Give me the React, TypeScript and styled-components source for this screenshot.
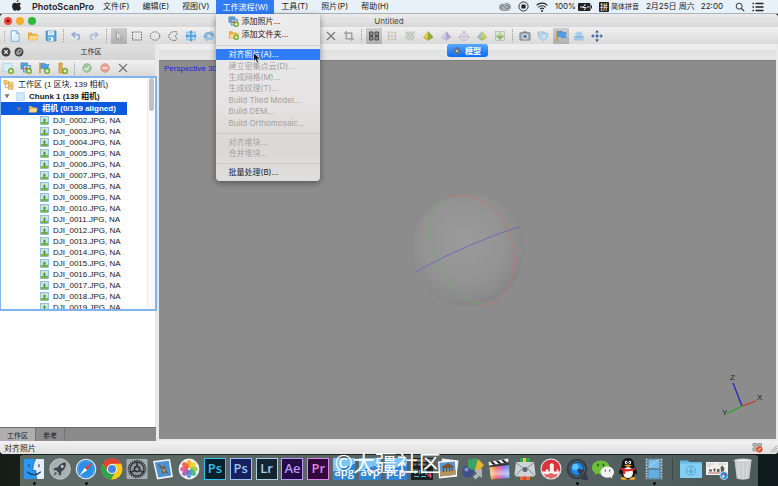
import React, { ReactNode } from 'react';
import styled, { createGlobalStyle, css } from 'styled-components';

const UI = `Inter, "Noto Sans CJK SC", sans-serif`;
const HELV = `"Liberation Sans", "Noto Sans CJK SC", sans-serif`;

const GlobalStyle = createGlobalStyle`
  * { box-sizing: border-box; }
  html, body, #root { height: 100%; }
  body { margin: 0; overflow: hidden; background: #141d1b; font-family: ${UI}; color: #1c1c1c; }
  button { font: inherit; color: inherit; border: 0; background: none; padding: 0; margin: 0; }
  ul { list-style: none; margin: 0; padding: 0; }
  svg { display: block; flex: none; }
`;

/* ---------- small icons, drawn on a 12 x 12 grid ---------- */

const plus = (
  <>
    <circle cx="9" cy="9" r="2.8" fill="#7fb52e" stroke="#5b8f1c" strokeWidth=".5" />
    <path d="M9 7.4v3.2M7.4 9h3.2" stroke="#fff" strokeWidth="1" />
  </>
);
const folder = (
  <>
    <path d="M1 10V2.5h3.6l1 1.3H10V10z" fill="#e2ac3f" />
    <path d="M1 10l1.7-4.7h8.8L10 10z" fill="#fbdc8a" stroke="#d9a23a" strokeWidth=".5" />
  </>
);
const photos = (
  <>
    <rect x="1" y="1" width="6.5" height="6" fill="#5fa6de" stroke="#3f7fb9" strokeWidth=".7" />
    <rect x="3.5" y="3.5" width="7" height="6.5" fill="#a9d3f2" stroke="#3f7fb9" strokeWidth=".7" />
    <path d="M4 7.500l2.500-3 2 3z" fill="#e2573c" />
  </>
);
const pyramid = (l: string, r: string, b: string) => (
  <>
    <path d="M6 1L.6 7.2 6 10.8z" fill={l} />
    <path d="M6 1l5.4 6.2L6 10.8z" fill={r} />
    <path d="M.6 7.2L6 8l5.4-.8L6 10.8z" fill={b} opacity=".7" />
  </>
);
const flag = (
  <>
    <path d="M2 .8v10.4" stroke="#c9973a" strokeWidth="1.6" />
    <path d="M3 1.4h4.2v1.2h4L9.9 5l1.3 2.6H6.4V6.4H3z" fill="#4f9fe8" stroke="#2a74bd" strokeWidth=".5" />
  </>
);

const glyphs: Record<string, ReactNode> = {
  newFile: (
    <>
      <path d="M2.2.8h5.2L10 3.4v7.8H2.2z" fill="#f4fafe" stroke="#5d9cc9" strokeWidth=".8" />
      <path d="M7.2.8v2.8H10" fill="#bfe0f5" stroke="#5d9cc9" strokeWidth=".7" />
      <path d="M3.4 5h5.2v5H3.4z" fill="#d8edf9" />
    </>
  ),
  folder,
  save: (
    <>
      <path d="M1 1h10v10H2.2L1 9.8z" fill="#56a9dc" stroke="#2f80b8" strokeWidth=".6" />
      <path d="M3 1.2h6v4H3zM3.6 7.2h4.8V11H3.6z" fill="#eef7fc" />
      <path d="M4.2 8h1.5v2.4H4.2z" fill="#3d86b7" />
      <path d="M4 2.6h4M4 3.8h4" stroke="#8bbcdc" strokeWidth=".5" />
    </>
  ),
  undo: (
    <path d="M5 2L2 4.6l3.2 2.6M2.4 4.6h4.8c3 0 3 4.4.2 5.4" fill="none" stroke="#8fa8d6" strokeWidth="1.5" />
  ),
  redo: (
    <path d="M7 2l3 2.6-3.2 2.6M9.6 4.6H4.8c-3 0-3 4.4-.2 5.4" fill="none" stroke="#a7bce0" strokeWidth="1.5" />
  ),
  pointer: (
    <path d="M3.4 1v8.6l2-1.8 1.4 3.2 1.5-.7L6.9 7.2h2.7z" fill="#dcdcdc" stroke="#8f8f8f" strokeWidth=".7" />
  ),
  rectSel: <rect x="1.5" y="2" width="9" height="8" fill="none" stroke="#555" strokeWidth=".9" strokeDasharray="1.6 1.1" />,
  ovalSel: <ellipse cx="6" cy="6" rx="4.8" ry="4.2" fill="none" stroke="#555" strokeWidth=".9" strokeDasharray="1.6 1" />,
  freeSel: (
    <path
      d="M9.6 1.8C6 .8 1.8 3 1.8 6.2S5 10.8 8 10.4c2.6-.4 1.6-2 .8-3-.9-1.2.2-1.8.9-3 .5-.9.7-2.2-.1-2.6z"
      fill="none" stroke="#555" strokeWidth=".9" strokeDasharray="1.6 1"
    />
  ),
  move: (
    <>
      <rect x="1.600" y="2" width="8.800" height="8" fill="#b3d8f2" stroke="#79b4de" strokeWidth=".6" />
      <path d="M6 .2l2 2.3H6.7v2.8h2.8V4l2.3 2-2.3 2V6.7H6.7v2.8H8l-2 2.3-2-2.3h1.3V6.7H2.5V8L.2 6l2.3-2v1.3h2.8V2.5H4z" fill="#4c9ad8" />
    </>
  ),
  rotate: (
    <>
      <path d="M1 7.5C.6 3.6 4 1.4 7.4 2.6L8.2 1l2.6 3.6-4 .8.5-1.3C5 3.6 3.4 5 3.6 7z" fill="#82badf" stroke="#5094c4" strokeWidth=".4" />
      <path d="M11 4.8c.4 4-3 6-6.4 4.8L3.8 11 1.2 7.6l4-.8-.5 1.2c2.3.6 4-.8 3.8-2.8z" fill="#a4cfec" stroke="#5094c4" strokeWidth=".4" />
    </>
  ),
  cross: <path d="M2 2l8 8M10 2l-8 8" stroke="#777" strokeWidth="1.3" />,
  crop: <path d="M3.2 1v7.8H11M1 3.2h7.8V11" fill="none" stroke="#949494" strokeWidth="1.2" />,
  grid: (
    <path
      d="M1.500 2h3.500v3.500H1.500zM1.500 6.500h3.500V10H1.500zM7 2h3.500v3.500H7zM7 6.500h3.500V10H7z"
      fill="#8c8c8c" stroke="#4e4e4e" strokeWidth="1"
    />
  ),
  colorDots: (
    <>
      <path d="M1.6 1.6h2.2v2.2H1.6zM8.2 4.8h2.2V7H8.2z" fill="#d9b6c6" />
      <path d="M4.9 1.6h2.2v2.2H4.9zM1.6 8h2.2v2.2H1.6z" fill="#e4c39a" />
      <path d="M8.2 1.6h2.2v2.2H8.2zM4.9 8h2.2v2.2H4.9z" fill="#bcd3a8" />
      <path d="M1.6 4.8h2.2V7H1.6zM8.2 8h2.2v2.2H8.2z" fill="#a9c1de" />
      <path d="M4.9 4.8h2.2V7H4.9z" fill="#d9cf9a" />
    </>
  ),
  noise: (
    <>
      <rect x="1.4" y="1.4" width="9.2" height="9.2" fill="#d2d6d3" />
      <path d="M2 2h1.5v1.5H2zM5 2.2h1.2v1.2H5zM8.6 2h1.4v1.4H8.6zM3.6 4.4h1.6V6H3.6zM7 4h1.6v1.6H7zM2 7h1.4v1.4H2zM5.4 6.4H7V8H5.4zM8.8 7h1.2v1.4H8.8zM4 9h1.4v1.2H4zM7.4 9h1.4v1.2H7.4z" fill="#b3bab8" />
    </>
  ),
  pyrGreen: pyramid('#d8cf55', '#86a83a', '#b8a83c'),
  pyrPurple: pyramid('#d3cce6', '#ada6cc', '#bcb4d6'),
  pyrWire: (
    <path d="M6 1L.8 7.4 6 10.8l5.2-3.4zM6 1v9.8M.8 7.4L6 6l5.2 1.4" fill="#e6e2ee" stroke="#b3abc8" strokeWidth=".7" />
  ),
  pyrTex: pyramid('#9cc7d6', '#d8c66a', '#8fbf6a'),
  tileTex: (
    <>
      <rect x="1.5" y="1.5" width="9" height="9" fill="#dfe5d4" stroke="#a9b0a2" strokeWidth=".6" />
      <path d="M1.8 6L6 2.6 10.2 6z" fill="#c9d9a0" />
      <path d="M1.8 6h8.4L6 10z" fill="#8dbc6a" />
      <path d="M1.5 6h9M6 1.5v9" stroke="#9aa597" strokeWidth=".5" />
    </>
  ),
  camera: (
    <>
      <rect x=".8" y="2.6" width="10.4" height="7.6" rx=".8" fill="#a3a9ae" stroke="#70767b" strokeWidth=".6" />
      <rect x="4" y="1.4" width="4" height="1.6" fill="#7f868b" />
      <circle cx="6" cy="6.4" r="2.9" fill="#e5eaee" />
      <circle cx="6" cy="6.4" r="1.9" fill="#5b7f9e" />
    </>
  ),
  shapes: (
    <path d="M1 2h6.6v1.4l3 .2L10.8 7 6.6 11 2 7.2z M3 6l4.4-3.8" fill="#c2dcf0" stroke="#8ab4d6" strokeWidth=".8" />
  ),
  flag,
  layers: (
    <>
      <path d="M2.5 3.2C4 .9 8 .9 9.5 3.2l.6 1.6H1.9z" fill="#a9cdea" />
      <path d="M1.2 6.8c1-2 8.6-2 9.6 0v1.4H1.2z" fill="#8cbbe2" />
      <path d="M.8 9.4c1-1.4 9.4-1.4 10.4 0v1.2H.8z" fill="#9cc6e8" />
    </>
  ),
  fit: (
    <>
      <path d="M6 0l1.900 2.600H4.100zM6 12L4.100 9.400h3.800zM0 6l2.600-1.900v3.800zM12 6L9.400 7.900V4.100z" fill="#3b5c92" />
      <circle cx="6" cy="6" r="1.400" fill="#3b5c92" />
      <path d="M6 2v2M6 8v2M2 6h2M8 6h2" stroke="#6f8bb8" strokeWidth="1" />
    </>
  ),
  addChunk: (
    <>
      <rect x="1" y="1.4" width="9" height="8.4" fill="#d7effb" stroke="#7dbbe0" strokeWidth=".7" strokeDasharray="1 .5" />
      {plus}
    </>
  ),
  addPhotos: <>{photos}{plus}</>,
  addFlag: <>{flag}{plus}</>,
  addScale: (
    <>
      <path d="M3 1h3.2v7h4.4v3H3z" fill="#edb845" stroke="#b98323" strokeWidth=".6" />
      <path d="M3 3h1.4M3 5h1.4M3 7h1.4" stroke="#a06d17" strokeWidth=".6" />
      {plus}
    </>
  ),
  addFolder: <>{folder}{plus}</>,
  ok: (
    <>
      <circle cx="6" cy="6" r="4.4" fill="#a0c6a0" stroke="#86ab86" strokeWidth=".5" />
      <path d="M3.8 6.2l1.6 1.6 2.9-3.4" fill="none" stroke="#eef6ee" strokeWidth="1.2" />
    </>
  ),
  deny: (
    <>
      <circle cx="6" cy="6" r="4.4" fill="#e8a08a" stroke="#cf8a76" strokeWidth=".5" />
      <path d="M3.4 6h5.2" stroke="#fbeeea" strokeWidth="1.7" />
    </>
  ),
  workspace: (
    <>
      <path d="M1 1.4h2.6l.5.8h1.7v3.4H1zM6 3.2h2.2l.5.8h2.3v3H6z" fill="#f4cf7a" stroke="#c98f2c" strokeWidth=".6" />
      <path d="M2.6 5.8v3.4h3.6" stroke="#888" strokeWidth=".7" fill="none" />
      <path d="M6 7.6h2.2l.5.7h2.3v2.9H6z" fill="#f4cf7a" stroke="#c98f2c" strokeWidth=".6" />
    </>
  ),
  chunk: <rect x=".8" y=".8" width="10.4" height="10.4" fill="#cfe9f9" stroke="#8ec3e6" strokeWidth=".9" strokeDasharray="1 .5" />,
  picture: (
    <>
      <rect x=".6" y=".6" width="10.8" height="10.8" fill="#c4e4f7" stroke="#6faed6" strokeWidth=".9" />
      <path d="M1 8.4l3-.8 4 .4 3-.6V11H1z" fill="#7fb441" />
      <path d="M6 3L3.8 6h1.4v3.4h1.6V6h1.4z" fill="#4b8e2a" />
      <circle cx="2.8" cy="3" r="1.2" fill="#f6d65b" />
    </>
  ),
  apple: (
    <path
      d="M8.2 0c.1 1.2-.9 2.3-2.1 2.3C6 1.200 7 .1 8.200 0zM10.900 8.700c-.5 1.300-1.500 3.100-2.700 3.100-.8 0-1-.5-2-.5s-1.300.5-2 .5C2.800 11.800 1.200 9 1.200 6.600c0-2.300 1.400-3.600 2.900-3.600.9 0 1.500.5 2.200.5.6 0 1.300-.6 2.400-.6.8 0 1.700.5 2.200 1.200-1.900 1.200-1.600 3.700 0 4.600z"
      fill="#222"
    />
  ),
  cloud: (
    <>
      <path d="M3.400 9.500a3.200 3.200 0 1 1 1.800-5.900 3.600 3.600 0 1 1 3 5.900z" fill="#b2b6bb" stroke="#7d8288" strokeWidth=".7" />
      <path d="M3.600 7.800a1.600 1.600 0 1 1 1.300-2.500L7 7.300A1.700 1.700 0 1 0 7 4.800" fill="none" stroke="#666b70" strokeWidth=".9" />
    </>
  ),
  record: (
    <>
      <circle cx="6" cy="6" r="5" fill="none" stroke="#222" strokeWidth="1" />
      <rect x="3.700" y="3.700" width="4.600" height="4.600" rx=".6" fill="#222" />
    </>
  ),
  wifi: (
    <>
      <path d="M.6 4.400a7.600 7.600 0 0 1 10.800 0M2.400 6.300a5 5 0 0 1 7.200 0M4.100 8.100a2.700 2.700 0 0 1 3.800 0" fill="none" stroke="#222" strokeWidth="1.100" />
      <circle cx="6" cy="10" r="1" fill="#222" />
    </>
  ),
  search: (
    <>
      <circle cx="5" cy="5" r="3.600" fill="none" stroke="#222" strokeWidth="1.100" />
      <path d="M7.700 7.700L11 11" stroke="#222" strokeWidth="1.300" />
    </>
  ),
  list: <path d="M.5 2.500H2M3.500 2.500h8M.5 6H2M3.500 6h8M.5 9.500H2M3.500 9.500h8" stroke="#222" strokeWidth="1.300" />,
  closeDark: (
    <>
      <circle cx="6" cy="6" r="5.400" fill="#444" />
      <path d="M3.900 3.900l4.200 4.200M8.100 3.900L3.900 8.100" stroke="#eee" strokeWidth="1.300" />
    </>
  ),
  floatDark: (
    <>
      <circle cx="6" cy="6" r="5.400" fill="#444" />
      <path d="M5 3.400h3.600V7H5zM3.500 5v3.600h3.600" fill="none" stroke="#eee" strokeWidth=".9" />
    </>
  ),
  closeTab: (
    <>
      <circle cx="6" cy="6" r="5.400" fill="#5b6f8b" />
      <path d="M3.900 3.900l4.200 4.200M8.100 3.900L3.900 8.100" stroke="#c8d6ea" strokeWidth="1.300" />
    </>
  ),
  network: (
    <>
      <path d="M1 1.500h4v3H1zM6.500 1.500h4v3h-4zM1 6.500h4v3H1zM3 4.500v2M5 3h2" fill="#b9bcbf" stroke="#85888b" strokeWidth=".8" />
      <circle cx="8" cy="8" r="3.500" fill="#e4502a" />
      <path d="M6.400 9.600l3.200-3.200" stroke="#fff" strokeWidth="1" />
    </>
  ),
  grip: <path d="M11 3l-8 8M11 6l-5 5M11 9l-2 2" stroke="#8a8a8a" strokeWidth=".9" />,
  triangle: <path d="M1 2.500h10L6 10.500z" fill="#777" />,
};

const Glyph = ({ name, size = 12 }: { name: string; size?: number }) => (
  <svg width={size} height={size} viewBox="0 0 12 12" aria-hidden="true">{glyphs[name]}</svg>
);

/* ---------- menu bar ---------- */

const Screen = styled.div`
  height: 100vh;
  display: flex;
  flex-direction: column;
`;
const MenuBar = styled.nav`
  flex: none;
  height: 14px;
  display: flex;
  align-items: stretch;
  gap: 1px;
  padding: 0 14px 0 11px;
  background: #e8f0f8;
  border-bottom: 1px solid #a9b3bd;
  font-size: 8px;
  line-height: 13px;
  white-space: nowrap;
  z-index: 3;
`;
const MenuSlot = styled.div`
  position: relative;
  display: flex;
`;
const MenuTitle = styled.button<{ $bold?: boolean; $open?: boolean }>`
  display: flex;
  align-items: center;
  padding: 0 6px;
  line-height: 13px;
  ${p => p.$bold && css`font-size: 9px; font-weight: 600; padding: 0 2px 0 9px;`}
  ${p => p.$open && css`background: #2f7cf6; color: #fff; height: 14px;`}
`;
const StatusItems = styled.div`
  margin-left: auto;
  display: flex;
  align-items: center;
  gap: 7px;
`;
const StatusPair = styled.span`
  display: flex;
  align-items: center;
  gap: 2px;
`;
const Percent = styled.span` font-size: 8px; `;
const InputName = styled.span` font-size: 7px; `;
const InputBadge = styled.span`
  width: 10px;
  height: 10px;
  border-radius: 1px;
  background: #222;
  color: #fff;
  font-size: 8px;
  line-height: 10px;
  text-align: center;
`;
const Clock = styled.span`
  display: flex;
  gap: 6px;
  margin-right: 5px;
`;

const Menu = styled.div`
  position: absolute;
  top: 14px;
  left: 0;
  width: 104px;
  padding: 1px 0 3px;
  background: linear-gradient(#ededed, #e4e2e2 55%, #dcd7d6 78%, #dedddd);
  border-radius: 0 0 4px 4px;
  box-shadow: 0 2px 6px rgba(0, 0, 0, .4);
`;
const MenuGroup = styled.div<{ $height: number }>`
  display: grid;
  grid-template-columns: 100%;
  grid-auto-rows: 1fr;
  height: ${p => p.$height}px;
`;
const MenuRule = styled.hr`
  height: 1px;
  margin: 4px 0 3px;
  border: 0;
  background: #cbcbcb;
`;
const MenuItem = styled.button<{ $selected?: boolean }>`
  display: flex;
  align-items: center;
  gap: 2px;
  padding: 0 0 0 12px;
  text-align: left;
  line-height: 11px;
  color: #222;
  &:disabled { color: #a2a2a2; }
  ${p => p.$selected && css`background: #2f7cf6; color: #fff;`}
`;
const MouseArrow = styled.svg`
  position: absolute;
  left: 37px;
  top: 38px;
`;

const WorkflowMenu = () => (
  <Menu role="menu">
    <MenuGroup $height={26}>
      <MenuItem role="menuitem"><Glyph name="addPhotos" size={11} />添加照片...</MenuItem>
      <MenuItem role="menuitem"><Glyph name="addFolder" size={11} />添加文件夹...</MenuItem>
    </MenuGroup>
    <MenuRule />
    <MenuGroup $height={80}>
      <MenuItem role="menuitem" $selected>对齐照片(A)...</MenuItem>
      {['建立密集点云(D)...', '生成网格(M)...', '生成纹理(T)...', 'Build Tiled Model...', 'Build DEM...', 'Build Orthomosaic...'].map(t => (
        <MenuItem role="menuitem" key={t} disabled>{t}</MenuItem>
      ))}
    </MenuGroup>
    <MenuRule />
    <MenuGroup $height={22}>
      <MenuItem role="menuitem" disabled>对齐堆块...</MenuItem>
      <MenuItem role="menuitem" disabled>合并堆块...</MenuItem>
    </MenuGroup>
    <MenuRule />
    <MenuGroup $height={11}>
      <MenuItem role="menuitem">批量处理(B)...</MenuItem>
    </MenuGroup>
    <MouseArrow width="8" height="12" viewBox="0 0 8 12" aria-hidden="true">
      <path d="M.6.6v8.800l2-1.800 1.400 3.400 1.700-.7-1.400-3.300h2.900z" fill="#111" stroke="#fff" strokeWidth=".6" />
    </MouseArrow>
  </Menu>
);

/* ---------- application window ---------- */

const Window = styled.main`
  flex: 1;
  min-height: 0;
  display: flex;
  flex-direction: column;
  background: #e9e9e9;
  border-radius: 4px;
  overflow: hidden;
`;
const TitleBar = styled.header`
  flex: none;
  height: 13px;
  display: grid;
  grid-template-columns: 1fr auto 1fr;
  align-items: center;
  padding: 0 4px;
  background: linear-gradient(#ebebeb, #d8d8d8);
`;
const Title = styled.h1`
  margin: 0;
  font-size: 8px;
  font-weight: 400;
  line-height: 12px;
  color: #4a4a4a;
`;
const Lights = styled.div`
  display: flex;
  gap: 4px;
`;
const Light = styled.button<{ $color: string; $dot?: boolean }>`
  width: 8px;
  height: 8px;
  border-radius: 50%;
  background: ${p => (p.$dot ? `radial-gradient(circle, #7c100c 1px, ${p.$color} 2px)` : p.$color)};
`;
const Toolbar = styled.div<{ $side?: boolean }>`
  flex: none;
  height: ${p => (p.$side ? 16 : 17)}px;
  display: flex;
  align-items: center;
  padding-left: ${p => (p.$side ? 0 : 4)}px;
  background: linear-gradient(#f1f1f1, #d9d9d9);
`;
const Handle = styled.span`
  width: 1px;
  height: 10px;
  margin-right: 2px;
  border-left: 1px dotted #aaa;
`;
const ToolGroup = styled.div`
  display: flex;
  gap: 2px;
`;
const ToolRule = styled.span`
  height: 13px;
  margin: 0 4px;
  border-left: 1px dotted #999;
`;
const Tool = styled.button<{ $pressed?: boolean }>`
  width: 16px;
  height: 16px;
  display: flex;
  align-items: center;
  justify-content: center;
  ${p => p.$pressed && css`background: linear-gradient(#cdcdcd, #b0b0b0);`}
`;
const Body = styled.div`
  flex: 1;
  min-height: 0;
  display: grid;
  grid-template-columns: 159px 1fr;
`;
const Side = styled.aside`
  min-height: 0;
  display: flex;
  flex-direction: column;
  padding-right: 4px;
`;
const SideHead = styled.div`
  flex: none;
  height: 16px;
  display: flex;
  align-items: center;
  gap: 3px;
  padding-left: 1px;
  background: linear-gradient(#e0e0e0, #d4d4d4);
`;
const SideButton = styled.button` display: block; `;
const SideTitle = styled.h2`
  flex: 1;
  margin: 0;
  text-align: center;
  font-size: 7px;
  font-weight: 400;
  line-height: 10px;
`;
const TreeArea = styled.div`
  flex: 1;
  min-height: 0;
  background: #fff;
`;
const TreeBox = styled.div`
  position: relative;
  height: 235px;
  max-height: 100%;
  margin-right: -2px;
  overflow: hidden;
  background: #fff;
  border: 2px solid #83b3ee;
  border-left-width: 1px;
  font-family: ${HELV};
  font-size: 8px;
  color: #151515;
`;
const Track = styled.span`
  position: absolute;
  top: 0;
  bottom: 0;
  right: 0;
  width: 8px;
  border-left: 1px solid #ececec;
  background: #fafafa;
`;
const Thumb = styled.span`
  display: block;
  width: 5px;
  height: 33px;
  margin: 0 1px;
  border-radius: 3px;
  background: #c1c1c1;
`;
const Node = styled.li<{ $indent: number; $heading?: boolean; $bold?: boolean; $selected?: boolean }>`
  display: flex;
  align-items: center;
  gap: 4px;
  height: ${p => (p.$heading ? 12 : 11)}px;
  margin-right: 28px;
  padding-left: ${p => p.$indent}px;
  white-space: nowrap;
  line-height: 11px;
  font-weight: ${p => (p.$bold ? 700 : 400)};
  ${p => p.$selected && css`height: 13px; background: #0b5bdc; color: #fff;`}
`;
const Twist = styled.span`
  width: 7px;
  margin-right: 1px;
`;
const SideTabs = styled.div`
  flex: none;
  height: 14px;
  display: flex;
  margin-right: -1px;
  background: #8a8a8a;
  border-top: 1px solid #6c6c6c;
  font-size: 7px;
`;
const SideTab = styled.button<{ $active?: boolean }>`
  padding: 0 7px;
  border-right: 1px solid #747474;
  background: ${p => (p.$active ? '#aeaeae' : '#8d8d8d')};
`;
const Work = styled.section`
  min-width: 0;
  display: flex;
  flex-direction: column;
  padding: 0 2px 2px 0;
`;
const TabStrip = styled.div`
  flex: none;
  height: 16px;
  display: flex;
  justify-content: center;
  align-items: flex-start;
  background: linear-gradient(#ededed 6px, #d9d9d9 6px, #e4e4e4 7px);
`;
const ModelTab = styled.button`
  height: 13px;
  display: flex;
  align-items: center;
  gap: 4px;
  padding: 0 7px 0 6px;
  border-radius: 3px;
  background: linear-gradient(#58a8fa, #0a6af4);
  color: #fff;
  font-size: 8px;
  font-weight: 700;
  line-height: 12px;
`;
const Viewport = styled.div`
  position: relative;
  flex: 1;
  min-height: 0;
  display: flex;
  align-items: center;
  justify-content: center;
  background: #8c8c8c;
  border-top: 1px solid #7e7e7e;
`;
const Projection = styled.span`
  position: absolute;
  left: 5px;
  top: 3px;
  font-family: ${HELV};
  font-size: 8px;
  line-height: 10px;
  color: #1f1fe0;
`;
const Axes = styled.svg`
  position: absolute;
  right: 8px;
  bottom: 20px;
  font-family: ${HELV};
  font-size: 8px;
`;
const StatusBar = styled.footer`
  flex: none;
  height: 13px;
  display: flex;
  align-items: center;
  gap: 5px;
  padding-left: 4px;
  background: linear-gradient(#f2f2f2, #dfdfdf);
  font-size: 8px;
  line-height: 12px;
`;
const StatusText = styled.span` flex: 1; `;

const Sphere = () => (
  <svg width="116" height="116" viewBox="0 0 116 116" role="img" aria-label="trackball">
    <defs>
      <radialGradient id="ball" cx=".46" cy=".42" r=".58">
        <stop offset="0" stopColor="#9b9b9b" />
        <stop offset=".6" stopColor="#949494" />
        <stop offset=".9" stopColor="#8b8b8b" />
        <stop offset="1" stopColor="#858585" />
      </radialGradient>
    </defs>
    <circle cx="58" cy="58" r="56" fill="url(#ball)" />
    <path d="M36 6C19 14 15 37 25 63c11 30 32 52 53 49" fill="none" stroke="#6cab6c" strokeWidth=".8" />
    <path d="M36 6c26-9 50 5 63 35 11 29 7 62-21 71l-7 1" fill="none" stroke="#c0736b" strokeWidth=".8" />
    <path d="M6 80C31 65 83 42 110 35" fill="none" stroke="#6969b8" strokeWidth=".9" />
  </svg>
);

const Tools = ({ names, pressed }: { names: string[]; pressed?: string }) => (
  <ToolGroup>
    {names.map((n, i) => (
      <Tool key={n + i} aria-label={n} $pressed={n === pressed}><Glyph name={n} /></Tool>
    ))}
  </ToolGroup>
);

/* ---------- dock ---------- */

const Desktop = styled.div`
  position: relative;
  flex: none;
  height: 32px;
  padding: 1px 20px 0;
  background: linear-gradient(90deg, #161d17, #202a25 30%, #17211f 70%, #0f1b1c);
`;
const Dock = styled.div`
  height: 100%;
  display: flex;
  justify-content: space-between;
  padding: 3px 4px 0 3px;
  border-radius: 3px 3px 0 0;
  background: linear-gradient(90deg, #5d6964, #5a6665 60%, #4c5a5a);
`;
const DockItem = styled.button<{ $running?: boolean }>`
  position: relative;
  width: 22px;
  height: 22px;
  ${p => p.$running && css`
    &::after {
      content: '';
      position: absolute;
      left: 10px;
      bottom: -5px;
      width: 3px;
      height: 3px;
      border-radius: 50%;
      background: #0a0a0a;
    }
  `}
`;
const DockRule = styled.span`
  width: 1px;
  height: 22px;
  margin: 0 3px;
  background: #3c4746;
`;
const AdobeTile = styled.span<{ $bg: string; $fg: string }>`
  display: block;
  height: 22px;
  border: 1px solid ${p => p.$fg};
  background: ${p => p.$bg};
  color: ${p => p.$fg};
  font-family: "Open Sans", sans-serif;
  font-size: 13px;
  font-weight: 600;
  line-height: 19px;
  text-align: center;
`;
const FileTile = styled.span`
  display: flex;
  align-items: flex-end;
  justify-content: center;
  height: 22px;
  background: linear-gradient(160deg, #7cc4f4 45%, #2f86d2 46%);
  color: #fff;
  font-family: "Open Sans", sans-serif;
  font-size: 11px;
  font-weight: 600;
  line-height: 16px;
`;
const Watermark = styled.span`
  position: absolute;
  left: 43%;
  top: -8px;
  font-family: "Noto Sans CJK SC", sans-serif;
  font-size: 22px;
  line-height: 30px;
  color: #fff;
  white-space: nowrap;
  z-index: 4;
`;

const petals = ['#f6a623', '#f3d325', '#9ccb3b', '#3fb37f', '#4a90d9', '#9b59b6', '#e0529c', '#ee5a3a'];

const dockArt: Record<string, ReactNode> = {
  Finder: (
    <>
      <rect x="1" y="1" width="20" height="20" rx="1" fill="#e2eefa" />
      <path d="M1 1h11.500C10.500 5 10 8.500 9.800 12.500h3c0 3 .2 5.500 1 8.500H1z" fill="#2a98f0" />
      <path d="M12.500 1C10.500 5 10 8.500 9.800 12.500h3c0 3 .2 5.500 1 8.500" fill="none" stroke="#1d4f86" strokeWidth=".7" />
      <path d="M6 6.500v2.200M16 6.500v2.200M4.500 14c3.500 3.500 9.500 3.500 13 0" fill="none" stroke="#17406e" strokeWidth="1.100" strokeLinecap="round" />
    </>
  ),
  Launchpad: (
    <>
      <circle cx="11" cy="11" r="10.300" fill="#a9b0b4" stroke="#d0d5d8" strokeWidth=".7" />
      <path d="M17 4.500c-4 0-7 2-8.500 5L5.500 10l-1.200 2.200 2.900.1 2.500 2.500.1 3 2.200-1.300.5-3c3-1.500 4.700-4.600 4.500-9z" fill="#3f474c" />
      <circle cx="13.200" cy="8.500" r="1.400" fill="#c3cacd" />
      <path d="M6.500 14l-2.200 3.700 3.700-2.200z" fill="#3f474c" />
    </>
  ),
  Safari: (
    <>
      <circle cx="11" cy="11" r="10.300" fill="#e8edf0" />
      <circle cx="11" cy="11" r="9.200" fill="#2b8fe6" />
      <circle cx="11" cy="11" r="7.900" fill="none" stroke="#a8d5f8" strokeWidth="1" strokeDasharray=".5 1.200" />
      <path d="M17.500 4.500L9.700 9.700l2.600 2.600z" fill="#ee3e34" />
      <path d="M4.500 17.500l5.200-7.800 2.600 2.600z" fill="#f3f5f7" />
    </>
  ),
  Chrome: (
    <>
      <circle cx="11" cy="11" r="10.500" fill="#fbc916" />
      <path d="M11 .5A10.500 10.500 0 0 0 1.900 5.800l4.500 7.800A5.200 5.200 0 0 1 11 5.800h9.100A10.500 10.500 0 0 0 11 .5z" fill="#df4132" />
      <path d="M1.900 5.800a10.500 10.500 0 0 0 8 15.700l4.800-7.900a5.200 5.200 0 0 1-8.300 0z" fill="#2da44f" />
      <circle cx="11" cy="11" r="5.100" fill="#f5f5f5" />
      <circle cx="11" cy="11" r="4" fill="#4387ee" />
    </>
  ),
  Settings: (
    <>
      <rect x=".5" y="1" width="21" height="20" rx="1" fill="#a5adb3" />
      <circle cx="11" cy="11" r="8.500" fill="none" stroke="#2d3135" strokeWidth="1.500" strokeDasharray="1.400 .9" />
      <circle cx="11" cy="11" r="7" fill="#8d959a" stroke="#2d3135" strokeWidth="1.300" />
      <circle cx="11" cy="11" r="2.600" fill="none" stroke="#2d3135" strokeWidth="1.500" />
      <path d="M11 8.500V4M8.800 12.200l-4 2.300M13.200 12.200l4 2.300" stroke="#2d3135" strokeWidth="1.500" />
    </>
  ),
  Mail: (
    <>
      <path d="M1 3l17-2 3 18-16 2.500z" fill="#f1f3f4" />
      <path d="M2.800 4.500L16.700 2.800l2.500 14.800L6.300 19.500z" fill="#4b91d4" />
      <path d="M5.500 6.500c3 0 4 1.500 5 3.200l2.500-2.500.3 4 3.200 4.500-3.500-1.200-3 1.500.5-4.200z" fill="#74562e" />
      <path d="M10.500 10.500l3 1.500-1.500 2.500z" fill="#d9b16a" />
    </>
  ),
  Photos: (
    <>
      <circle cx="11" cy="11" r="10.400" fill="#f4f4f2" />
      {petals.map((c, i) => (
        <ellipse key={c} cx="11" cy="6" rx="2.600" ry="3.900" fill={c} opacity=".88" transform={`rotate(${i * 45} 11 11)`} />
      ))}
    </>
  ),
  Arcade: (
    <>
      <rect x="0" y="0" width="22" height="22" fill="#1b1f22" />
      <path d="M0 1h22v3H0zM0 5.500h22v2H0z" fill="#6d7578" />
      <path d="M2 0v9M6 0v9M11 0v9M16 0v9" stroke="#222" strokeWidth="1.200" />
      <path d="M2 12h5M4.500 12v4M8.500 12v4M11 16v-4h2.500v2H11M15 12v4h2M3 18.500h5M10 18.500h5" stroke="#48bfc9" strokeWidth="1.200" fill="none" />
      <path d="M19.500 20v-5.500L17.500 18h3.500" stroke="#e14a62" strokeWidth="1.200" fill="none" />
    </>
  ),
  Preview: (
    <>
      <path d="M5 .5l16.500 2-2 16L3 17z" fill="#f0f0ee" />
      <path d="M1 3.500L19 2l1.200 16.500L2 20.500z" fill="#fafaf8" />
      <path d="M2.500 4.800L17.900 3.500l.8 13.200-15.400 1.900z" fill="#5e97cd" />
      <path d="M2.900 13.500l15.600-1.500.2 4.700-15.400 1.900z" fill="#b5935b" />
      <path d="M5 8.500l6-3.500 5.500 3-.2 1.500-11 .7z" fill="#6e5733" />
      <path d="M6.500 10v4M9.500 10v4M12.500 9.500v4M15.200 9.500v3.500" stroke="#594526" strokeWidth=".9" />
    </>
  ),
  Shapes: (
    <>
      <circle cx="6" cy="13.500" r="6" fill="#3e4f8c" />
      <circle cx="4.500" cy="11.500" r="2" fill="#8290c5" />
      <path d="M6 2l7-2 3 1.500V10l-6 2-4-2.500z" fill="#3aa365" />
      <path d="M16 1l6 6-4 5h-5z" fill="#e8b42d" />
      <path d="M12 12l8-1v9l-2.500-2-4 3.500-2.500-3 4-3z" fill="#b0b6b8" />
    </>
  ),
  'Final Cut': (
    <>
      <defs>
        <linearGradient id="fcp" x1="0" x2="1">
          <stop offset="0" stopColor="#f0c12e" /><stop offset=".35" stopColor="#ef4a4c" />
          <stop offset=".65" stopColor="#a04ed4" /><stop offset="1" stopColor="#3aa5ee" />
        </linearGradient>
        <linearGradient id="fcpGlow" x1="0" y1="0" x2="0" y2="1">
          <stop offset="0" stopColor="#fff" stopOpacity="0" /><stop offset=".6" stopColor="#fff" stopOpacity=".6" />
          <stop offset="1" stopColor="#fff" stopOpacity="0" />
        </linearGradient>
      </defs>
      <path d="M1.500 9L21 7l.5 13L3 21.500z" fill="url(#fcp)" />
      <path d="M1.500 9L21 7l.5 13L3 21.500z" fill="url(#fcpGlow)" />
      <path d="M.5 4L20 .5l.6 3L1.200 8z" fill="#f1f1f1" />
      <path d="M2 3.800l3.500 3.200 2.500-.5-3.500-3.200zM7.500 2.800L11 6l2.500-.5L10 2.300zM13 1.800L16.500 5l2.500-.6-3.500-3z" fill="#222" />
      <path d="M1.300 7.700L20.800 5l.1 1.500L1.500 9z" fill="#2b2b2b" />
    </>
  ),
  Compressor: (
    <>
      <path d="M6 0h10v5H6z" fill="#35a54a" /><path d="M9 0h3v5H9z" fill="#e8cd34" />
      <path d="M6 17h10v5H6z" fill="#e4742c" /><path d="M9 17h3v5H9z" fill="#e2413c" />
      <path d="M2 4h18l1.500 12.500-1.500 2H2l-1.500-2z" fill="#cdd3d6" />
      <path d="M1.500 4l9.500 8 9.500-8M2 17l6-6M20 17l-6-6" fill="none" stroke="#828b90" strokeWidth="1" />
      <circle cx="11" cy="11.500" r="2.500" fill="#5b656a" />
    </>
  ),
  Tower: (
    <>
      <circle cx="11" cy="11" r="10.500" fill="#eceeee" />
      <circle cx="11" cy="11" r="9.500" fill="#d9363c" />
      <path d="M1.800 13.500h4v-2h2.500v2h1.500v-7l2-1.500 2 1.500v7h3v-2h1.500v2h1.800A9.500 9.500 0 0 1 11 20.500a9.500 9.500 0 0 1-9.200-7z" fill="#f7f1f0" />
      <path d="M4 15.500l3 1 4-1.500 4 1.500 3-1-1.500 3.300-5.500 1.700-5.500-1.700z" fill="#d9363c" opacity=".75" />
    </>
  ),
  QuickTime: (
    <>
      <circle cx="11" cy="11" r="10.300" fill="#343d49" />
      <circle cx="11" cy="11" r="6.200" fill="#1787ee" />
      <circle cx="9.500" cy="9" r="3.200" fill="#5fc0fb" />
      <path d="M11 11l5.500.5 5.500 8v2.500h-6z" fill="#343d49" />
      <circle cx="11" cy="11" r="7.600" fill="none" stroke="#5a6575" strokeWidth="1" />
    </>
  ),
  WeChat: (
    <>
      <path d="M9 2.500c-5 0-9 3-9 7 0 2.200 1.200 4 3 5.300L2.300 17l3-1.400c1.200.4 2.400.6 3.700.6 4.800 0 8.700-3 8.700-6.800S13.900 2.500 9 2.500z" fill="#6dbf3b" />
      <path d="M15.500 8.500c-4 0-7 2.500-7 5.600s3 5.600 7 5.600c1 0 2-.2 2.800-.5l2.200 1.200-.6-2c1.400-1 2.100-2.500 2.100-4.300 0-3.100-2.600-5.600-6.500-5.600z" fill="#f1f2f2" />
      <path d="M6 6.200v1.500M11.500 6.200v1.500" stroke="#234d14" strokeWidth="1.500" strokeLinecap="round" />
      <path d="M13.300 12.200v.8M17.700 12.200v.8" stroke="#666" strokeWidth="1.300" strokeLinecap="round" />
    </>
  ),
  QQ: (
    <>
      <path d="M11 0C7 0 4.800 2.800 4.800 6.500c0 2-1.800 4-2.600 6.500-.5 1.700 0 3.600.6 3.300L4 15c.5 4 3.500 6 7 6s6.500-2 7-6l1.200 1.300c.6.300 1.100-1.600.6-3.300-.8-2.500-2.600-4.500-2.600-6.500C17.200 2.800 15 0 11 0z" fill="#141414" />
      <ellipse cx="11" cy="14.500" rx="5" ry="5.500" fill="#fbfbfb" />
      <ellipse cx="9.200" cy="4.400" rx="1.300" ry="1.700" fill="#fff" /><ellipse cx="12.800" cy="4.400" rx="1.300" ry="1.700" fill="#fff" />
      <circle cx="9.500" cy="4.600" r=".6" /><circle cx="12.500" cy="4.600" r=".6" />
      <path d="M7.300 7.500c2-1.200 5.400-1.200 7.400 0-2 1.600-5.400 1.600-7.400 0z" fill="#f2a51f" />
      <path d="M4 9.500c4.500 2.200 9.500 2.200 14 0l.5 2c-4 2-8 2.200-10.200 1.700V16H6v-3.500L3.600 11.400z" fill="#dc2f2c" />
      <path d="M3.500 20.500c1-2 4.500-2 6.500.8-2 1-6 .9-6.500-.8zM18.500 20.500c-1-2-4.500-2-6.500.8 2 1 6 .9 6.500-.8z" fill="#f2a51f" />
    </>
  ),
  Film: (
    <>
      <rect x="2" y="0" width="18" height="22" fill="#60717c" />
      <rect x="5.500" y="1.500" width="11" height="8.800" fill="#78bdea" />
      <rect x="5.500" y="11.700" width="11" height="8.800" fill="#62aee2" />
      <path d="M3.700 1v20M18.300 1v20" stroke="#c9d4da" strokeWidth="1.500" strokeDasharray="1.500 1.300" />
      <path d="M5.500 8l9-6.500h2L5.500 10z" fill="#a6d8f5" opacity=".7" />
    </>
  ),
  Downloads: (
    <>
      <path d="M0 2.500h8l1.500 1.500H22V20H0z" fill="#63b8e4" />
      <path d="M0 5.500h22V20H0z" fill="#86cff2" />
      <circle cx="11" cy="12.500" r="4.500" fill="none" stroke="#58a9d5" strokeWidth="1.100" />
      <path d="M11 9.500v5M8.800 12.500l2.200 2.300 2.200-2.300" fill="none" stroke="#58a9d5" strokeWidth="1.300" />
    </>
  ),
  Page: (
    <>
      <rect x="0" y="4" width="22" height="13" fill="#f1f1ee" />
      <path d="M1 6h7M1 8h4M12 6h8" stroke="#bbb" strokeWidth=".8" />
      <path d="M3 11.500h3v2H3zM7.500 10.500h2v3h-2zM11 11h2.500v3H11zM14.500 9l2-1.500 2 3-1 3.500h-2.500z" fill="#5d5d58" />
      <path d="M2 15h14" stroke="#b55a55" strokeWidth=".9" />
      <circle cx="18" cy="17.500" r="4" fill="#2b8fe6" stroke="#e8edf0" strokeWidth=".7" />
      <path d="M20.500 15l-3.400 1.700 1.800 1.800z" fill="#ee3e34" /><path d="M15.500 20l1.600-3.300 1.800 1.800z" fill="#fff" />
    </>
  ),
  Trash: (
    <>
      <path d="M2.500 2l2.200 18.500c2.500 1.500 10 1.500 12.600 0L19.500 2z" fill="#c9cdcf" />
      <path d="M6 4l1.500 16M11 4v17M16 4l-1.500 16" stroke="#d6dadb" strokeWidth="1.500" />
      <ellipse cx="11" cy="2.500" rx="8.700" ry="1.700" fill="#e8eaeb" stroke="#aeb4b6" strokeWidth=".6" />
    </>
  ),
};

const adobe: Record<string, [string, string]> = {
  Ps: ['#08202b', '#2fc3ee'],
  'Ps ': ['#16205f', '#9ac4f5'],
  Lr: ['#142530', '#a9cfe2'],
  Ae: ['#230b45', '#b99af0'],
  Pr: ['#33083c', '#dd86ea'],
};
const dockApps = [
  'Finder', 'Launchpad', 'Safari', 'Chrome', 'Settings', 'Mail', 'Photos', 'Ps', 'Ps ', 'Lr', 'Ae', 'Pr',
  'apg', 'avp', 'pcp', 'Arcade', 'Preview', 'Shapes', 'Final Cut', 'Compressor', 'Tower', 'QuickTime', 'WeChat', 'QQ', 'Film',
];
const running = ['Finder', 'Safari', 'QuickTime', 'Film'];

const DockEntry = ({ name }: { name: string }) => {
  let art: ReactNode = <svg width="22" height="22" viewBox="0 0 22 22" aria-hidden="true">{dockArt[name]}</svg>;
  if (adobe[name]) art = <AdobeTile $bg={adobe[name][0]} $fg={adobe[name][1]}>{name.trim()}</AdobeTile>;
  else if (!dockArt[name]) art = <FileTile>{name}</FileTile>;
  return <DockItem aria-label={name.trim()} $running={running.includes(name)}>{art}</DockItem>;
};

const files = Array.from({ length: 18 }, (_, i) => `DJI_${String(i + 2).padStart(4, '0')}.JPG, NA`);

export default function App() {
  return (
    <Screen>
      <GlobalStyle />
      <MenuBar>
        <Glyph name="apple" size={11} />
        <MenuTitle $bold>PhotoScanPro</MenuTitle>
        {['文件(F)', '编辑(E)', '视图(V)'].map(t => <MenuTitle key={t}>{t}</MenuTitle>)}
        <MenuSlot>
          <MenuTitle $open aria-expanded="true">工作流程(W)</MenuTitle>
          <WorkflowMenu />
        </MenuSlot>
        {['工具(T)', '照片(P)', '帮助(H)'].map(t => <MenuTitle key={t}>{t}</MenuTitle>)}
        <StatusItems>
          <Glyph name="cloud" />
          <Glyph name="record" size={11} />
          <Glyph name="wifi" />
          <StatusPair>
            <Percent>100%</Percent>
            <svg width="14" height="8" viewBox="0 0 14 8" aria-hidden="true">
              <rect width="12.500" height="8" rx="1" fill="#222" />
              <path d="M13 2.500h1v3h-1z" fill="#222" />
              <path d="M2 4h3M7.500 1L5 4.500h3L6 7M9 4h2.500" stroke="#e8f0f8" strokeWidth="1" fill="none" />
            </svg>
          </StatusPair>
          <StatusPair><InputBadge>拼</InputBadge><InputName>简体拼音</InputName></StatusPair>
          <Clock><span>2月25日 周六</span><span>22:00</span></Clock>
          <Glyph name="search" size={10} />
          <Glyph name="list" size={12} />
        </StatusItems>
      </MenuBar>

      <Window>
        <TitleBar>
          <Lights>
            <Light $color="#f4473f" $dot aria-label="close" />
            <Light $color="#f6ae2d" aria-label="minimize" />
            <Light $color="#2fb83a" aria-label="zoom" />
          </Lights>
          <Title>Untitled</Title>
        </TitleBar>
        <Toolbar>
          <Handle />
          <Tools names={['newFile', 'folder', 'save']} />
          <ToolRule />
          <Tools names={['undo', 'redo']} />
          <ToolRule />
          <Tools names={['pointer', 'rectSel', 'ovalSel', 'freeSel', 'move', 'rotate']} pressed="pointer" />
          <ToolRule />
          <Tools names={['ok', 'deny']} />
          <ToolRule />
          <Tools names={['camera', 'flag', 'layers', 'cross', 'crop']} />
          <ToolRule />
          <Tools names={['grid', 'colorDots', 'noise', 'pyrGreen', 'pyrPurple', 'pyrWire', 'pyrTex', 'tileTex']} pressed="grid" />
          <ToolRule />
          <Tools names={['camera', 'shapes', 'flag', 'layers', 'fit']} pressed="flag" />
        </Toolbar>

        <Body>
          <Side>
            <SideHead>
              <SideButton aria-label="close panel"><Glyph name="closeDark" size={10} /></SideButton>
              <SideButton aria-label="float panel"><Glyph name="floatDark" size={10} /></SideButton>
              <SideTitle>工作区</SideTitle>
            </SideHead>
            <Toolbar $side>
              <Tools names={['addChunk', 'addPhotos', 'addFlag', 'addScale']} />
              <ToolRule />
              <Tools names={['ok', 'deny', 'cross']} />
            </Toolbar>
            <TreeArea>
              <TreeBox>
                <ul>
                  <Node $indent={2} $heading><Glyph name="workspace" size={11} />工作区 (1 区块, 139 相机)</Node>
                  <Node $indent={3} $heading $bold>
                    <Twist><Glyph name="triangle" size={6} /></Twist><Glyph name="chunk" size={9} />Chunk 1 (139 相机)
                  </Node>
                  <Node $indent={15} $heading $bold $selected>
                    <Twist><Glyph name="triangle" size={6} /></Twist><Glyph name="folder" size={10} />相机 (0/139 aligned)
                  </Node>
                  {files.map(f => <Node key={f} $indent={39}><Glyph name="picture" size={9} />{f}</Node>)}
                </ul>
                <Track><Thumb /></Track>
              </TreeBox>
            </TreeArea>
            <SideTabs>
              <SideTab $active>工作区</SideTab>
              <SideTab>参考</SideTab>
            </SideTabs>
          </Side>
          <Work>
            <TabStrip>
              <ModelTab><Glyph name="closeTab" size={8} />模型</ModelTab>
            </TabStrip>
            <Viewport>
              <Projection>Perspective 30°</Projection>
              <Sphere />
              <Axes width="48" height="48" viewBox="0 0 48 48">
                <path d="M22 35L13 12" stroke="#2226c8" strokeWidth="1.300" />
                <path d="M22 35l14-5" stroke="#d63020" strokeWidth="1.300" />
                <path d="M22 35L6 43" stroke="#1fae2c" strokeWidth="1.300" />
                <text x="10" y="9" fill="#222">Z</text>
                <text x="37" y="29" fill="#222">X</text>
                <text x="2" y="44" fill="#222">Y</text>
              </Axes>
            </Viewport>
          </Work>
        </Body>
        <StatusBar>
          <StatusText>对齐照片</StatusText>
          <Glyph name="network" size={11} />
          <Glyph name="grip" size={10} />
        </StatusBar>
      </Window>

      <Desktop>
        <Dock>
          {dockApps.map(n => <DockEntry key={n} name={n} />)}
          <DockRule />
          {['Downloads', 'Page', 'Trash'].map(n => <DockEntry key={n} name={n} />)}
        </Dock>
        <Watermark>©大疆社区</Watermark>
      </Desktop>
    </Screen>
  );
}
